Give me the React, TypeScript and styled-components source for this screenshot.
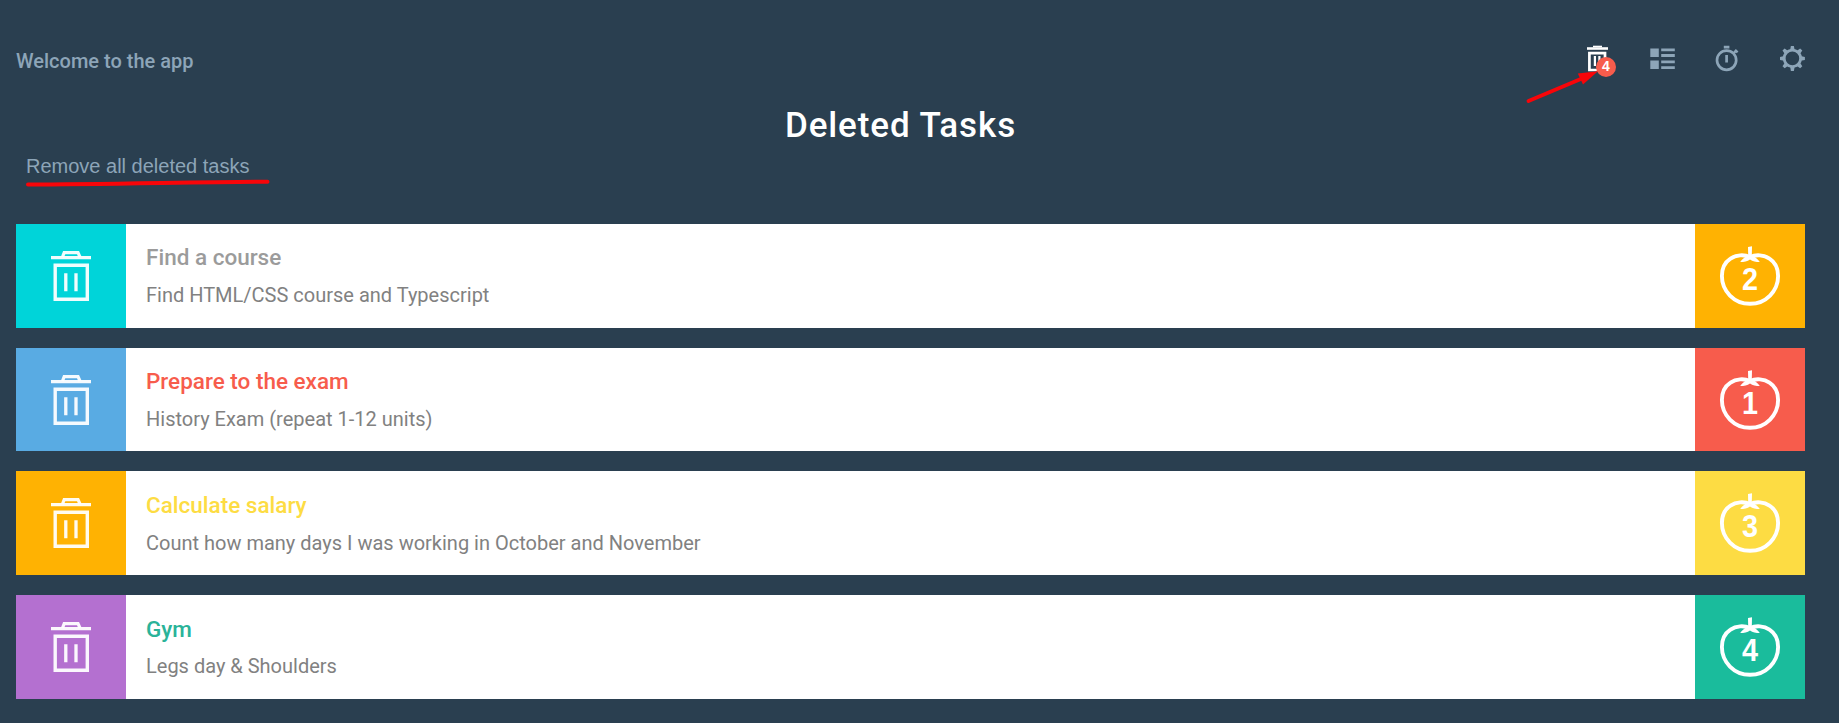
import React from "react";
import styled, { createGlobalStyle } from "styled-components";

const GlobalStyle = createGlobalStyle`
  * { box-sizing: border-box; }
  body {
    margin: 0;
    background: #2a3f50;
    font-family: Roboto, "Liberation Sans", sans-serif;
    overflow: hidden;
  }
  h1, h2, p { margin: 0; }
`;

const Page = styled.main`
  position: relative;
  min-height: 723px;
  padding: 40px 34px 0 16px;
`;

const Header = styled.header`
  display: flex;
  justify-content: space-between;
  height: 60px;
`;

const Welcome = styled.p`
  margin-top: 9px;
  font-size: 20px;
  line-height: 24px;
  font-weight: 500;
  color: #8da5b8;
`;

const Nav = styled.nav`
  display: flex;
  gap: 36px;
  margin-right: -4px;
  padding-top: 4px;
`;

const NavButton = styled.button<{ $active?: boolean }>`
  position: relative;
  width: 29px;
  height: 30px;
  padding: 0;
  border: 0;
  background: none;
  color: ${(p) => (p.$active ? "#fff" : "#8da5b8")};
  svg { display: block; }
`;

const Badge = styled.span`
  position: absolute;
  left: 11px;
  top: 13px;
  width: 20px;
  height: 20px;
  border-radius: 50%;
  background: #f75c4c;
  color: #fff;
  font: bold 14px/19px "Liberation Sans", sans-serif;
  text-align: center;
`;

const Heading = styled.h1`
  height: 50px;
  font-size: 35px;
  line-height: 52px;
  font-weight: 500;
  letter-spacing: 0.9px;
  color: #fff;
  text-align: center;
  margin-right: 20px;
`;

const RemoveAll = styled.button`
  display: block;
  height: 32px;
  margin: 0 0 42px 10px;
  padding: 0;
  border: 0;
  background: none;
  color: #8da5b8;
  font: 20px/32px "Liberation Sans", sans-serif;
`;

const TaskList = styled.section`
  display: flex;
  flex-direction: column;
  gap: 20px;
`;

const TaskRow = styled.article`
  display: grid;
  grid-template-columns: 110px 1fr 110px;
  height: 103.7px;
  background: #fff;
`;

const IconCell = styled.div<{ $color: string }>`
  background: ${(p) => p.$color};
  svg { display: block; }
`;

const TaskText = styled.div`
  padding: 19.45px 20px 0;
`;

const TaskTitle = styled.h2<{ $color: string }>`
  font-size: 22.5px;
  line-height: 28px;
  font-weight: 500;
  color: ${(p) => p.$color};
`;

const TaskDescription = styled.p`
  margin-top: 11.8px;
  font-size: 20px;
  line-height: 24px;
  color: #818181;
`;

const Count = styled.text`
  font: bold 31px "Liberation Sans", sans-serif;
  fill: #fff;
  text-anchor: middle;
`;

const Marks = styled.svg`
  position: absolute;
  left: 0;
  top: 0;
  pointer-events: none;
`;

const SmallTrash = () => (
  <svg width="29" height="30" viewBox="-2 0 29 30" fill="none" stroke="currentColor">
    <path d="M6 2.5H15" strokeWidth="1.6" />
    <path d="M0 4.5H21" strokeWidth="2.6" />
    <path d="M2.4 9.2H18V26H2.4Z" strokeWidth="2.7" />
    <path d="M7.9 12V22M12.4 12V22" strokeWidth="2.2" />
  </svg>
);

const ListIcon = () => (
  <svg width="29" height="30" viewBox="0 0 29 30" fill="currentColor">
    <path d="M0.3 4.4h8.5v8.5H.3zM.3 16.5h8.5V25H.3zM11.2 4.4h13.6v2.8H11.2zM11.2 10.1h13.6v2.8H11.2zM11.2 16.5h13.6v2.8H11.2zM11.2 22.2h13.6V25H11.2z" />
  </svg>
);

const TimerIcon = () => (
  <svg width="29" height="30" viewBox="0 0 29 30" fill="none" stroke="currentColor">
    <circle cx="11.6" cy="16.2" r="9.6" strokeWidth="2.7" />
    <path d="M8.8 3.1h5.6M11.6 11v7.6" strokeWidth="2.7" />
    <path d="M18.2 9.6l3.2-3.2M20 5.8l2.6 2.6" strokeWidth="2.4" />
  </svg>
);

const teeth = [0, 45, 90, 135, 180, 225, 270, 315];

const GearIcon = () => (
  <svg width="29" height="30" viewBox="0 0 29 30" fill="currentColor">
    <circle cx="12.4" cy="14.4" r="8.2" fill="none" stroke="currentColor" strokeWidth="2.8" />
    {teeth.map((angle) => (
      <path key={angle} d="M10.9 1.9h3l.8 4.3h-4.6z" transform={`rotate(${angle} 12.4 14.4)`} />
    ))}
  </svg>
);

const BigTrash = () => (
  <svg width="110" height="103" viewBox="0 0 110 103" fill="none" stroke="#fff" strokeOpacity=".94">
    <path d="M46.5 33L48.2 28.6H62L64 33" strokeWidth="3.2" />
    <path d="M35 33.7H75" strokeWidth="3.2" />
    <path d="M39.2 41.2H71.3V75.2H39.2Z" strokeWidth="3.4" />
    <path d="M49.8 49.3V67.3M60 49.3V67.3" strokeWidth="3.3" />
  </svg>
);

const Tomato = ({ count }: { count: number }) => (
  <svg width="110" height="103" viewBox="0 0 110 103" fill="none" stroke="#fff">
    <path
      d="M55 33C49 30.3 41 30.8 35.5 34.6C29.5 38.5 26.9 45 26.9 52C26.9 67 39 79.8 55 79.8C71 79.8 83.1 67 83.1 52C83.1 45 80.5 38.5 74.5 34.6C69 30.8 61 30.3 55 33Z"
      strokeWidth="3.9"
    />
    <path d="M53 23L57 22.3L56.8 31.5C60 33 63 35 64.8 38C61 38 57.5 37.4 55 35.4C52.5 37.4 49 38 45.2 38C47 35 50 33 53.2 31.5Z" fill="#fff" stroke="none" />
    <Count transform="translate(55 66) scale(0.93 1)" stroke="none">{count}</Count>
  </svg>
);

const tasks = [
  { title: "Find a course", text: "Find HTML/CSS course and Typescript", left: "#00d4d9", right: "#ffb202", ink: "#9b9b9b", count: 2 },
  { title: "Prepare to the exam", text: "History Exam (repeat 1-12 units)", left: "#59abe3", right: "#f75c4c", ink: "#f75c4c", count: 1 },
  { title: "Calculate salary", text: "Count how many days I was working in October and November", left: "#ffb202", right: "#fddc43", ink: "#fddc43", count: 3 },
  { title: "Gym", text: "Legs day & Shoulders", left: "#b470d0", right: "#1abc9c", ink: "#2ab399", count: 4 },
];

export default function App() {
  return (
    <Page>
      <GlobalStyle />
      <Header>
        <Welcome>Welcome to the app</Welcome>
        <Nav>
          <NavButton $active><SmallTrash /><Badge>4</Badge></NavButton>
          <NavButton><ListIcon /></NavButton>
          <NavButton><TimerIcon /></NavButton>
          <NavButton><GearIcon /></NavButton>
        </Nav>
      </Header>
      <Heading>Deleted Tasks</Heading>
      <RemoveAll>Remove all deleted tasks</RemoveAll>
      <TaskList>
        {tasks.map((task) => (
          <TaskRow key={task.title}>
            <IconCell $color={task.left}><BigTrash /></IconCell>
            <TaskText>
              <TaskTitle $color={task.ink}>{task.title}</TaskTitle>
              <TaskDescription>{task.text}</TaskDescription>
            </TaskText>
            <IconCell $color={task.right}><Tomato count={task.count} /></IconCell>
          </TaskRow>
        ))}
      </TaskList>
      <Marks width="1839" height="200" viewBox="0 0 1839 200" fill="none">
        <path d="M1528.5 101L1582 78.5" stroke="#f80509" strokeWidth="3.8" strokeLinecap="round" />
        <path d="M1598 71.3L1577.8 73.6L1583 84.5Z" fill="#f80509" />
        <path d="M28 184.5C100 184.5 200 182 267.5 181.7" stroke="#f80509" strokeWidth="4" strokeLinecap="round" />
      </Marks>
    </Page>
  );
}
